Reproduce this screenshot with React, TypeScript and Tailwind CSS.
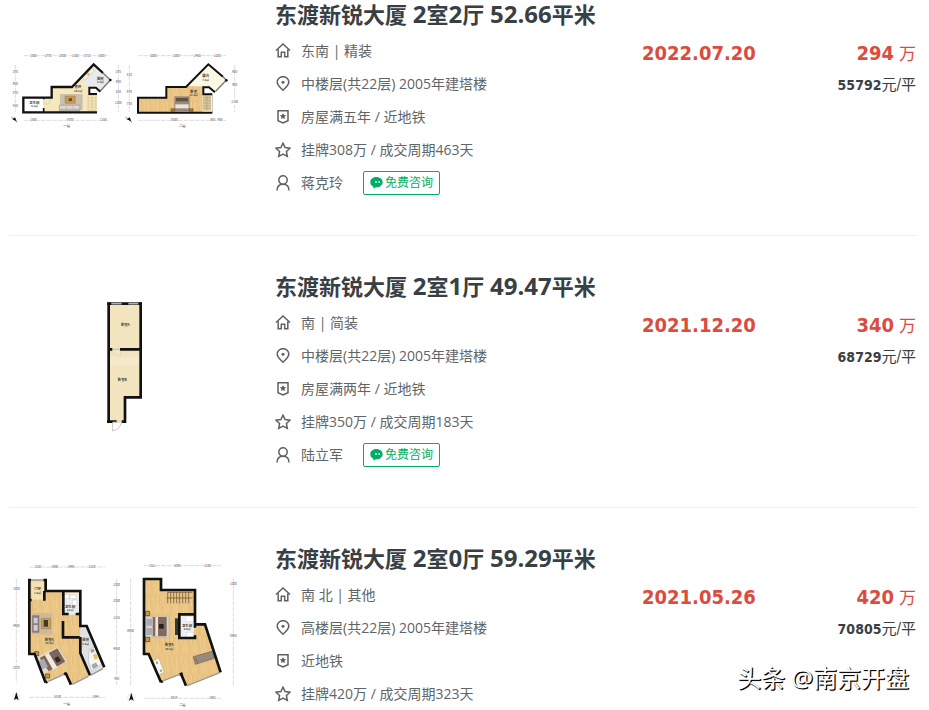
import type { ReactNode } from "react"

type Listing = {
  id: string
  rooms: number
  halls: number
  area: string
  orientation: string
  floor: string
  tags: string
  cycle: string
  agent?: string
  date: string
  price: number
  unitPrice: number
  plan: ReactNode
}

function Dimensions({ d, labels }: { d: string; labels: [number, number, string][] }) {
  return (
    <g>
      <path d={d} stroke="#b9b9b9" strokeWidth="1.5" strokeDasharray="14 3" fill="none" />
      {labels.map(([x, y, text]) => (
        <text key={`${x}-${y}`} x={x} y={y} fontSize="9" fill="#444" textAnchor="middle" stroke="#fff" strokeWidth="2" paintOrder="stroke">
          {text}
        </text>
      ))}
    </g>
  )
}

function RoomLabel({ x, y, name, size }: { x: number; y: number; name: string; size?: string }) {
  return (
    <text x={x} y={y} fontSize="10" fontWeight="700" fill="#333" textAnchor="middle">
      {name}
      {size && (
        <tspan x={x} dy="10" fontSize="8">
          {size}
        </tspan>
      )}
    </text>
  )
}

function PlanFrame({ label, children }: { label: string; children: ReactNode }) {
  return (
    <svg
      role="img"
      aria-label={label}
      viewBox="0 0 240 165"
      className="mt-px h-[165px] w-[240px] font-['Noto_Sans_CJK_SC',sans-serif]"
    >
      <defs>
        <pattern id="wood" width="28" height="60" patternUnits="userSpaceOnUse">
          <rect width="28" height="60" fill="#ebc584" />
          <path d="M7 0v34M14 18v42M21 0v28M28 26v34" stroke="#e0b56e" strokeWidth="1.5" />
          <path d="M3 8v44M18 4v30M24 34v20" stroke="#f1d29b" strokeWidth="2" />
        </pattern>
      </defs>
      {children}
    </svg>
  )
}

function DuplexNarrowPlan() {
  return (
    <PlanFrame label="东渡新锐大厦 2室2厅 户型图">
      <g transform="translate(-9 39) scale(.3333)">
        <path d="M70 173H155V141H216L257 101L298 143H265V164H291V217H70Z" fill="#f6e8bd" />
        <path d="M72 176H130V214H72Z" fill="#fff" />
        <path d="M251 104L281 74L331 120L301 153L290 140H262L251 129Z" fill="#e8eaec" />
        <path d="M247 113L277 84L284 92L255 121Z" fill="#f4f1df" stroke="#999" />
        <path d="M259 103l6-6 6 6-6 6Z" fill="#e2c65a" />
        <path d="M180 162h68v48h-68z" fill="#c9c1ae" />
        <path d="M195 168h31v22h-31z" fill="#c89a56" stroke="#8c6b3c" />
        <path d="M206 175h10v8h-10z" fill="#5b4a35" />
        <path d="M178 195h62v18h-62z" fill="#bcb5b5" stroke="#888" />
        <path d="M180 197h18v9h-18zM200 197h18v9h-18zM220 197h18v9h-18z" fill="#dcd7d5" />
        <path d="M264 165h24v46h-24zM264 174h24M264 183h24M264 192h24M264 201h24M276 165v46" stroke="#b59e68" fill="none" />
        <path d="M131 176v16h16q4-8 2-16" stroke="#c2b28c" fill="none" />
        <path d="M131 172V178M131 204V216" stroke="#111" strokeWidth="5" />
        <path d="M291 217H70V173H155V141H216L281 73L309 99" stroke="#111" strokeWidth="7" fill="none" />
        <path d="M309 99L331 120L301 153" stroke="#777" strokeWidth="4" fill="none" />
        <path d="M291 162H268V143H288L301 155" stroke="#111" strokeWidth="6" fill="none" />
        <circle cx="331" cy="120" r="4" fill="#111" />
        <RoomLabel x={103} y={191} name="卫生间" size="4.2㎡" />
        <RoomLabel x={234} y={145} name="客厅" size="20.4㎡" />
        <RoomLabel x={301} y={119} name="厨房" size="4.3㎡" />
        <Dimensions
          d="M72 47H328M46 75V216M355 75V216M72 241H328"
          labels={[
            [100, 50, "1500"],
            [144, 50, "1770"],
            [188, 50, "2800"],
            [226, 50, "1100"],
            [261, 50, "1710"],
            [304, 50, "1500"],
            [46, 98, "370"],
            [46, 134, "900"],
            [46, 161, "870"],
            [46, 200, "450"],
            [355, 98, "370"],
            [355, 130, "900"],
            [355, 159, "850"],
            [355, 191, "1200"],
            [100, 244, "1500"],
            [210, 244, "5700"],
            [310, 244, "1150"],
          ]}
        />
        <path d="M34 231L52 247" stroke="#555" strokeWidth="2" />
        <path d="M37 238L45 232L50 244Z" fill="#111" />
        <text x="200" y="261" fontSize="10" textAnchor="middle" fill="#222">
          一层
        </text>
      </g>
      <g transform="translate(111 39) scale(.3333)">
        <path d="M54 173H139V141H198L265 74L282 90V143H248V217H54Z" fill="url(#wood)" />
        <path d="M200 138L265 74L319 121L285 156L270 140Z" fill="#fbf9e4" />
        <path d="M164 170h44v43h-44z" fill="#9b8c78" stroke="#6f6457" />
        <path d="M168 174h36v10h-36z" fill="#5d534a" />
        <path d="M166 193h40v12h-40z" fill="#e9e5dd" />
        <path d="M153 206h11v8h-11zM208 206h11v8h-11z" fill="#b17c35" stroke="#111" />
        <path d="M249 166h24v46h-24z" fill="#dcc79a" />
        <path d="M249 173h24M249 181h24M249 189h24M249 197h24M249 205h24M261 166v46" stroke="#8c8060" />
        <path d="M277 218V165" stroke="#999" strokeWidth="2" />
        <path d="M277 218H54V173H139V141H198L265 73L309 110" stroke="#111" strokeWidth="6" fill="none" />
        <path d="M309 110L319 121L287 154" stroke="#777" strokeWidth="4" fill="none" />
        <path d="M277 163H250V142H267L285 157" stroke="#111" strokeWidth="6" fill="none" />
        <circle cx="319" cy="121" r="4" fill="#111" />
        <RoomLabel x={257} y={112} name="露台" size="7.5㎡" />
        <RoomLabel x={221} y={158} name="卧室" size="21.3㎡" />
        <Dimensions
          d="M55 47H318M28 75V216M344 75V216M55 241H318"
          labels={[
            [100, 50, "3300"],
            [169, 50, "2300"],
            [232, 50, "2450"],
            [292, 50, "1200"],
            [28, 107, "810"],
            [28, 160, "970"],
            [28, 196, "750"],
            [344, 100, "900"],
            [344, 137, "900"],
            [344, 190, "1150"],
            [163, 244, "8500"],
            [278, 244, "850"],
            [300, 244, "950"],
          ]}
        />
        <path d="M16 231L36 247" stroke="#555" strokeWidth="2" />
        <path d="M20 238L29 232L34 244Z" fill="#111" />
        <text x="187" y="261" fontSize="10" textAnchor="middle" fill="#222">
          二层
        </text>
      </g>
    </PlanFrame>
  )
}

function StripPlan() {
  return (
    <PlanFrame label="东渡新锐大厦 2室1厅 户型图">
      <g transform="translate(81 17) scale(.3333)">
        <path d="M56 42H152V322H104V395H56Z" fill="#f3e4c0" />
        <path d="M62 178h30v20q-22-2-30-20z" fill="#efe6d2" stroke="#c9bb9a" />
        <path d="M46 202h106v26H46z" fill="#fff" opacity=".2" />
        <path d="M56 37V398M51 395H80M95 395H105V322H152V37M56 178H67M90 178H152" stroke="#111" strokeWidth="8" fill="none" />
        <path d="M67 178H90" stroke="#b8ae98" strokeWidth="2" />
        <path d="M52 41H156" stroke="#111" strokeWidth="8" />
        <path d="M64 41H95M115 41H145" stroke="#aeb1b4" strokeWidth="5" />
        <path d="M68 396h27M68 396v27q20-4 27-25" stroke="#aaa" strokeWidth="2" fill="#fff" />
        <RoomLabel x={106} y={108} name="卧室A" />
        <RoomLabel x={97} y={272} name="卧室B" />
      </g>
    </PlanFrame>
  )
}

function DuplexAngledPlan() {
  return (
    <PlanFrame label="东渡新锐大厦 2室0厅 户型图">
      <g transform="translate(-9 10) scale(.3333)">
        <path d="M88 76H137V110H241V209L262 212L314 336L271 361L213 390L197 354L137 383L104 296H88Z" fill="url(#wood)" />
        <path d="M94 79h38v55H94z" fill="#f3e2b4" />
        <path d="M190 113h48v66h-48z" fill="#eceeee" />
        <path d="M241 213L260 211L312 335L271 361L239 294Z" fill="#dfe1e3" />
        <path d="M96 136v30q24-5 31-30" fill="none" stroke="#c9b181" />
        <path d="M97 174h60v64H97z" fill="#cdb99f" />
        <path d="M97 182h20v50H97z" fill="#8b7f86" stroke="#645a61" />
        <path d="M101 188h12v17h-12zM101 210h12v17h-12z" fill="#d3cacf" />
        <path d="M124 190h28v31h-28z" fill="#c8a052" stroke="#765c30" />
        <path d="M131 195h13v20h-13z" fill="#3e3934" />
        <path d="M110 307L173 276L200 320L131 356Z" fill="#e3ddd2" />
        <path d="M119 309L172 280L196 320L146 349Z" fill="#7d6558" />
        <path d="M134 300L146 293L172 337L159 344Z" fill="#efe9df" />
        <path d="M174 304l9 13-13 6-7-13z" fill="#2d2925" />
        <path d="M114 319l18-8 12 25-18 7z" fill="#a7a9b4" />
        <path d="M104 290h12v12h-12zM137 357h12v12h-12z" fill="#c29a49" stroke="#493b22" strokeWidth="2" />
        <path d="M193 118h15v13h-15zM210 120h19v11h-19zM217 135h14v17h-14z" fill="#fff" stroke="#aaa" />
        <path d="M267 283L286 275L304 328L276 350L265 318Z" fill="#f5f5f3" stroke="#888" />
        <path d="M279 299l10-4 5 15-10 5z" fill="#e2c65a" />
        <path d="M272 285l8-3 3 7-8 4zM276 330l12-6 5 9-13 8z" fill="#aaa" stroke="#555" />
        <path d="M137 383L104 297H88V136M88 136V74M84 75H93M130 75H137V108H241V213H260L313 337M88 135H95M133 108V137M190 110V177H206M227 177H241M189 198V247H239M241 246V294L270 361M197 354L213 389M137 383L142 380M192 358L200 354" stroke="#111" strokeWidth="8" fill="none" strokeLinejoin="miter" />
        <path d="M93 75H130M145 379L192 358M217 388L265 364M271 361L309 341" stroke="#999" strokeWidth="4" />
        <RoomLabel x={113} y={106} name="门厅" size="2.8㎡" />
        <RoomLabel x={210} y={158} name="卫生间" size="3.8㎡" />
        <RoomLabel x={148} y={258} name="卧室A" size="20.4㎡" />
        <RoomLabel x={257} y={259} name="厨房" size="5.5㎡" />
        <Dimensions
          d="M88 36H315M49 72V382M350 72V390M88 427H315"
          labels={[
            [113, 39, "1520"],
            [164, 39, "1900"],
            [213, 39, "1495"],
            [276, 39, "2180"],
            [49, 106, "1800"],
            [49, 215, "4950"],
            [49, 341, "2570"],
            [350, 92, "1000"],
            [350, 142, "2000"],
            [350, 192, "1325"],
            [350, 285, "4950"],
            [350, 374, "450"],
            [173, 430, "5530"],
            [286, 430, "1594"],
          ]}
        />
        <circle cx="49" cy="426" r="11" fill="#fff" stroke="#bbb" />
        <path d="M49 411L56 435L49 431L42 435Z" fill="#111" />
        <text x="200" y="450" fontSize="10" textAnchor="middle" fill="#222">
          一层
        </text>
      </g>
      <g transform="translate(111 10) scale(.3333)">
        <path d="M72 72H123V106H225V208H255L302 352L197 392L183 356L123 382L86 296H72Z" fill="url(#wood)" />
        <path d="M143 112v33M143 112h74M152 112v33M161 112v33M170 112v33M179 112v33M188 112v33M197 112v33M206 112v33M140 129h77" stroke="#5f4a2c" strokeWidth="2" fill="none" />
        <path d="M77 184h70v64H77z" fill="#dcd3c7" stroke="#a49a8e" />
        <path d="M98 186h42v58H98z" fill="#806a5d" />
        <path d="M106 186h8v58h-8z" fill="#eee5da" />
        <path d="M117 207h14v14h-14z" fill="#222" />
        <path d="M79 191h17v21H79zM79 219h17v21H79z" fill="#a7acbc" />
        <path d="M76 169h13v13H76zM76 247h13v13H76z" fill="#c29a49" stroke="#493b22" strokeWidth="2" />
        <path d="M165 190h10v50h-10z" fill="#333a36" />
        <path d="M179 178h43v70h-43z" fill="#eef0f0" />
        <path d="M197 184h24v16h-24zM200 232h20v14h-20z" fill="#fff" stroke="#bbb" />
        <path d="M99 319L116 309L133 352L114 361Z" fill="#f7f7f1" stroke="#888" />
        <path d="M107 321l5-3 3 7-5 3zM119 346l5-3 3 5-5 4z" fill="#8cab55" />
        <path d="M220 305L276 289L283 310L226 328Z" fill="#988b79" stroke="#6d6254" strokeWidth="2" />
        <path d="M225 308L234 325" stroke="#6d6254" strokeWidth="2" />
        <path d="M123 382L86 297H72V72H123V105H225V208H255L302 352M225 178H178V249H225V241M225 208V218M183 356L198 392M123 382L128 378M178 359L188 355" stroke="#111" strokeWidth="8" fill="none" />
        <path d="M128 378L180 358M202 392L298 354" stroke="#999" strokeWidth="4" />
        <RoomLabel x={201} y={216} name="卫生间" size="5.0㎡" />
        <RoomLabel x={148} y={274} name="卧室A" size="40.5㎡" />
        <Dimensions
          d="M72 32H302M32 70V392M340 70V392M72 430H302"
          labels={[
            [97, 35, "1521"],
            [173, 35, "3091"],
            [263, 35, "2280"],
            [32, 232, "6950"],
            [340, 90, "1000"],
            [340, 247, "8950"],
            [162, 433, "5424"],
            [277, 433, "1402"],
          ]}
        />
        <circle cx="34" cy="428" r="11" fill="#fff" stroke="#bbb" />
        <path d="M34 413L41 437L34 433L27 437Z" fill="#111" />
        <text x="187" y="453" fontSize="10" textAnchor="middle" fill="#222">
          二层
        </text>
      </g>
    </PlanFrame>
  )
}

const listings: Listing[] = [
  {
    id: "1",
    rooms: 2,
    halls: 2,
    area: "52.66",
    orientation: "东南 | 精装",
    floor: "中楼层(共22层) 2005年建塔楼",
    tags: "房屋满五年 / 近地铁",
    cycle: "挂牌308万 / 成交周期463天",
    agent: "蒋克玲",
    date: "2022.07.20",
    price: 294,
    unitPrice: 55792,
    plan: <DuplexNarrowPlan />,
  },
  {
    id: "2",
    rooms: 2,
    halls: 1,
    area: "49.47",
    orientation: "南 | 简装",
    floor: "中楼层(共22层) 2005年建塔楼",
    tags: "房屋满两年 / 近地铁",
    cycle: "挂牌350万 / 成交周期183天",
    agent: "陆立军",
    date: "2021.12.20",
    price: 340,
    unitPrice: 68729,
    plan: <StripPlan />,
  },
  {
    id: "3",
    rooms: 2,
    halls: 0,
    area: "59.29",
    orientation: "南 北 | 其他",
    floor: "高楼层(共22层) 2005年建塔楼",
    tags: "近地铁",
    cycle: "挂牌420万 / 成交周期323天",
    date: "2021.05.26",
    price: 420,
    unitPrice: 70805,
    plan: <DuplexAngledPlan />,
  },
]

const icons = {
  house: <path d="M1 7.500L8 1L15 7.500M3.200 6.500V13.800H6.300V9.300H9.700V13.800H12.800V6.500" />,
  pin: (
    <>
      <path d="M8 14.200C4.500 11 2.200 8.800 2.200 6.200a5.800 5.500 0 0 1 11.600 0C13.800 8.800 11.500 11 8 14.200Z" />
      <circle cx="8" cy="6.200" r="1.500" fill="currentColor" stroke="none" />
    </>
  ),
  badge: (
    <>
      <path d="M3 1.800H13V11.800L8 14L3 11.800Z" />
      <path d="M8 3.900l1 2 2.200.3-1.600 1.500.4 2.200L8 8.900l-2 1 .4-2.200L4.800 6.200l2.200-.3Z" fill="currentColor" stroke="none" />
    </>
  ),
  star: <path d="M8 1.200L10.100 5.500L15 6.200L11.400 9.500L12.300 14.300L8 12L3.700 14.300L4.600 9.500L1 6.200L5.900 5.500Z" />,
  person: (
    <>
      <circle cx="8" cy="5" r="4.200" />
      <path d="M2 15.500C2 11.500 4.500 9.200 8 9.200S14 11.500 14 15.500" />
    </>
  ),
}

function InfoLine({ icon, children }: { icon: keyof typeof icons; children: ReactNode }) {
  return (
    <li className="flex h-[33px] items-center gap-2.5">
      <svg
        aria-hidden="true"
        viewBox="0 0 16 16"
        className="size-4 shrink-0 fill-none stroke-current text-[#5d6164]"
        strokeWidth="1.5"
      >
        {icons[icon]}
      </svg>
      {children}
    </li>
  )
}

function ListingRow({ item }: { item: Listing }) {
  return (
    <li className="flex border-b border-[#f0f0f0] pt-9 pb-9 pr-0.5 first:pt-0 last:border-b-0 last:pb-0">
      <div className="w-[266px] shrink-0">{item.plan}</div>
      <div className="min-w-0 flex-1">
        <h2 className="h-7 text-[22px] leading-7 font-bold whitespace-nowrap text-[#394043]">
          东渡新锐大厦 <span className="text-2xl leading-7">{item.rooms}</span>室
          <span className="text-2xl leading-7">{item.halls}</span>厅{" "}
          <span className="text-2xl leading-7">{item.area}</span>平米
        </h2>
        <ul className="mt-1.5 text-sm whitespace-nowrap text-[#606567]">
          <InfoLine icon="house">{item.orientation}</InfoLine>
          <InfoLine icon="pin">{item.floor}</InfoLine>
          <InfoLine icon="badge">{item.tags}</InfoLine>
          <InfoLine icon="star">{item.cycle}</InfoLine>
          {item.agent && (
            <InfoLine icon="person">
              <span>{item.agent}</span>
              <button
                type="button"
                className="ml-2.5 flex h-6 items-center gap-0.5 rounded-xs border border-[#00ae66] px-1.5 text-xs text-[#00ae66]"
              >
                <svg aria-hidden="true" viewBox="0 0 13 12" className="h-3 w-[13px]">
                  <path d="M6.500 0C2.900 0 .3 2.200.3 5.200c0 2.100 1.200 3.700 3.100 4.500l.3 2 2.300-1.500h.5c3.600 0 6.200-2.100 6.200-5S10.100 0 6.500 0Z" fill="currentColor" />
                  <circle cx="6" cy="5" r=".9" fill="#fff" />
                  <circle cx="9.200" cy="5" r=".9" fill="#fff" />
                </svg>
                免费咨询
              </button>
            </InfoLine>
          )}
        </ul>
      </div>
      <time className="mt-[39px] w-[154px] shrink-0 font-['DejaVu_Sans_Condensed','DejaVu_Sans','Noto_Sans_CJK_SC',sans-serif] text-xl leading-7 font-bold text-[#db4c3f]">
        {item.date}
      </time>
      <div className="mt-[39px] w-[120px] shrink-0 text-right font-['DejaVu_Sans_Condensed','DejaVu_Sans','Noto_Sans_CJK_SC',sans-serif]">
        <p className="h-7 text-[17px] leading-7 text-[#db4c3f]">
          <span className="text-xl leading-7 font-bold">{item.price}</span> 万
        </p>
        <p className="mt-2 text-[15px] leading-5 text-[#394043]">
          <span className="text-sm leading-5 font-bold">{item.unitPrice}</span>元/平
        </p>
      </div>
    </li>
  )
}

export default function App() {
  return (
    <main
      lang="zh-CN"
      className="relative bg-white pr-[11px] pl-[9px] font-['Open_Sans','Noto_Sans_CJK_SC',sans-serif]"
    >
      <ul>
        {listings.map((item) => (
          <ListingRow key={item.id} item={item} />
        ))}
      </ul>
      <p className="absolute right-5 bottom-3.5 text-2xl leading-9 whitespace-nowrap text-white [text-shadow:1px_1px_0_#000,1px_1px_1px_#000]">
        头条 @南京开盘
      </p>
    </main>
  )
}
